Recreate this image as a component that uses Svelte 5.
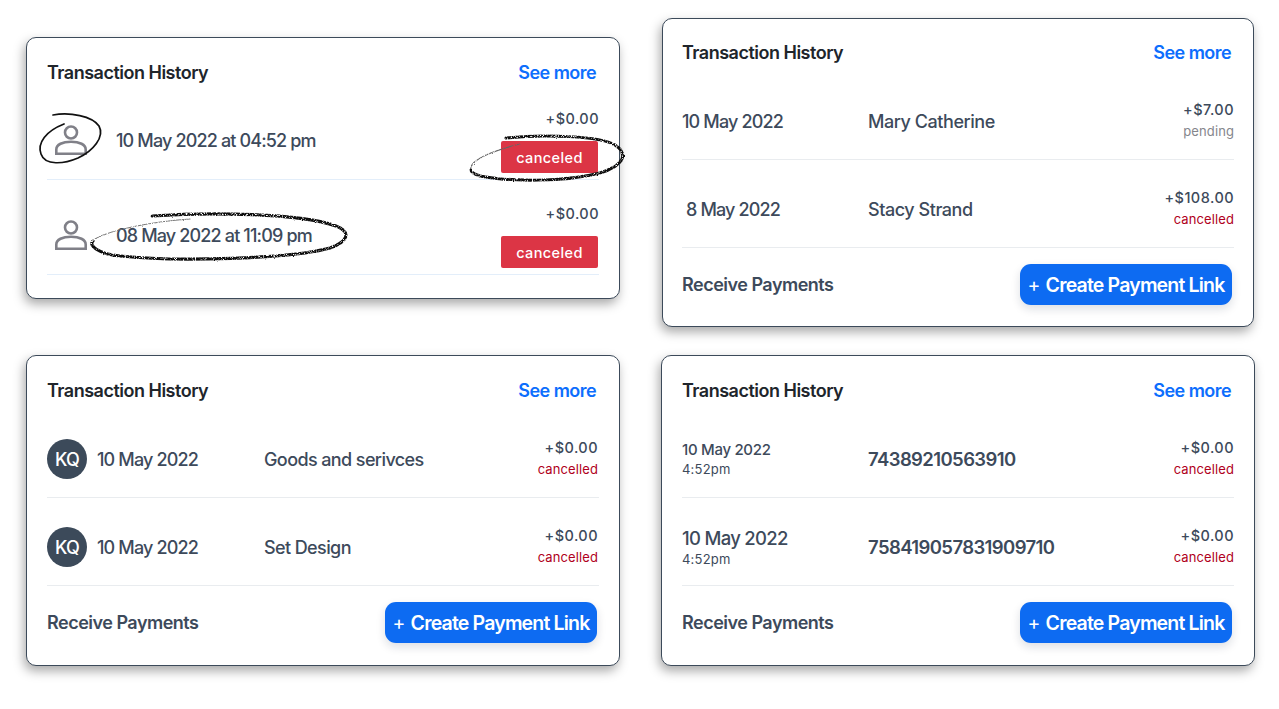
<script>
  const userRows = [
    { date: '10 May 2022 at 04:52 pm', amount: '+$0.00' },
    { date: '08 May 2022 at 11:09 pm', amount: '+$0.00' }
  ];
  const nameRows = [
    { date: '10 May 2022', indent: false, name: 'Mary Catherine', amount: '+$7.00', status: 'pending' },
    { date: '8 May 2022', indent: true, name: 'Stacy Strand', amount: '+$108.00', status: 'cancelled' }
  ];
  const avatarRows = [
    { date: '10 May 2022', name: 'Goods and serivces' },
    { date: '10 May 2022', name: 'Set Design' }
  ];
  const idRows = [
    { date: '10 May 2022', big: false, id: '74389210563910' },
    { date: '10 May 2022', big: true, id: '758419057831909710' }
  ];
</script>

{#snippet header()}
  <div class="header">
    <span class="title">Transaction History</span>
    <span class="more">See more</span>
  </div>
{/snippet}

{#snippet footer()}
  <div class="footer">
    <span class="receive">Receive Payments</span>
    <button class="create"><span class="plus">+</span>Create Payment Link</button>
  </div>
{/snippet}

{#snippet money(amount, status)}
  <div class="money">
    <div class="amount">{amount}</div>
    <div class="status {status}">{status}</div>
  </div>
{/snippet}

<div class="page">
  <section class="card one">
    {@render header()}
    {#each userRows as r}
      <div class="row tall">
        <svg class="person" width="32" height="30" viewBox="0 0 32 30" fill="none" stroke="#808088" stroke-width="2.6">
          <circle cx="16" cy="7.5" r="6" />
          <path d="M1.3 28.7v-4.2c0-5 6.2-7.800 14.700-7.800s14.700 2.800 14.700 7.800v4.200z" />
        </svg>
        <span class="date long">{r.date}</span>
        <div class="stack">
          <div class="amount">{r.amount}</div>
          <div class="badge">canceled</div>
        </div>
      </div>
    {/each}
  </section>

  <section class="card two">
    {@render header()}
    {#each nameRows as r}
      <div class="row">
        <span class="date col" class:indent={r.indent}>{r.date}</span>
        <span class="desc">{r.name}</span>
        {@render money(r.amount, r.status)}
      </div>
    {/each}
    {@render footer()}
  </section>

  <section class="card three">
    {@render header()}
    {#each avatarRows as r}
      <div class="row">
        <span class="avatar">KQ</span>
        <span class="date avcol">{r.date}</span>
        <span class="desc">{r.name}</span>
        {@render money('+$0.00', 'cancelled')}
      </div>
    {/each}
    {@render footer()}
  </section>

  <section class="card">
    {@render header()}
    {#each idRows as r}
      <div class="row">
        <div class="col when">
          <div class="day" class:big={r.big}>{r.date}</div>
          <div class="time">4:52pm</div>
        </div>
        <span class="desc ident">{r.id}</span>
        {@render money('+$0.00', 'cancelled')}
      </div>
    {/each}
    {@render footer()}
  </section>

  <svg class="scribbles" width="1279" height="709" viewBox="0 0 1279 709" fill="none" aria-hidden="true">
    <defs>
      <filter id="rough" x="-10%" y="-30%" width="120%" height="160%">
        <feTurbulence type="fractalNoise" baseFrequency="0.9" numOctaves="2" seed="4" result="noise" />
        <feDisplacementMap in="SourceGraphic" in2="noise" scale="2.2" result="moved" />
        <feColorMatrix in="noise" type="matrix" values="0 0 0 0 0  0 0 0 0 0  0 0 0 0 0  0 0 0 -5 3.6" result="grain" />
        <feComposite in="moved" in2="grain" operator="in" />
      </filter>
    </defs>
    <path d="M53 115C70 112 92 116 99 126C105 137 93 151 78 158C64 164 45 166 41 154C37 143 46 131 64 124" stroke="#111" stroke-width="1.700" stroke-linecap="round" />
    <g filter="url(#rough)" stroke-linecap="round">
      <path d="M190 219C150 222 110 230 95 239" stroke="#777" stroke-width="1.200" />
      <path d="M152 216C210 212 300 213 336 226C351 232 349 241 330 248C290 259 175 262 120 256C98 254 88 245 93 241" stroke="#111" stroke-width="3.200" />
      <path d="M520 144C495 150 468 160 471 170" stroke="#666" stroke-width="1.200" />
      <path d="M506 138C545 134 600 136 615 145C630 155 622 166 600 173C565 182 510 182 480 176C474 174 471 172 471 170" stroke="#111" stroke-width="3" />
    </g>
  </svg>
</div>

<style>
  :global(body) {
    margin: 0;
    background: #fff;
  }

  .page {
    position: relative;
    width: 1279px;
    height: 709px;
    box-sizing: border-box;
    padding: 18px 0 0 26px;
    display: grid;
    grid-template-columns: 594px 594px;
    column-gap: 41px;
    row-gap: 28px;
    align-items: start;
    align-content: start;
    font-family: Inter, "Noto Sans", sans-serif;
    color: #3d4a5b;
    overflow: hidden;
  }

  .card {
    box-sizing: border-box;
    background: #fff;
    border: 1px solid #3c4a5a;
    border-radius: 10px;
    padding: 15px 20px 22px;
    box-shadow: -2px 5px 11px rgba(0, 0, 0, 0.34);
  }

  .one {
    margin-top: 19px;
    padding-top: 22px;
    padding-bottom: 23px;
  }

  .two {
    margin: 0 1px;
    padding: 14px 19px 21px;
  }

  .header {
    height: 39px;
    display: flex;
    align-items: center;
    justify-content: space-between;
  }

  .one .header {
    height: 25px;
  }

  .title {
    font-size: 18px;
    font-weight: 600;
    letter-spacing: -0.5px;
    color: #20252b;
  }

  .more {
    font-size: 18px;
    font-weight: 600;
    letter-spacing: -0.55px;
    color: #0d6efd;
    margin-right: 3px;
  }

  .row {
    height: 77px;
    margin-top: 11px;
    box-sizing: border-box;
    border-bottom: 1px solid #e9ecef;
    display: flex;
    align-items: center;
  }

  .tall {
    height: 90px;
    margin-top: 5px;
    padding-top: 11px;
    border-bottom-color: #e3eefa;
    position: relative;
  }

  .person {
    margin-left: 8px;
    flex: none;
  }

  .date,
  .desc {
    font-size: 18px;
    font-weight: 500;
    letter-spacing: -0.85px;
    white-space: nowrap;
  }

  .desc {
    letter-spacing: -0.45px;
  }

  .three .desc {
    letter-spacing: -0.6px;
  }

  .long {
    margin-left: 29px;
  }

  .col {
    width: 186px;
    flex: none;
  }

  .indent {
    box-sizing: border-box;
    padding-left: 4px;
  }

  .avatar {
    width: 40px;
    height: 40px;
    flex: none;
    border-radius: 50%;
    background: #3c4a5a;
    color: #fff;
    font-size: 18px;
    font-weight: 500;
    letter-spacing: -0.8px;
    display: flex;
    align-items: center;
    justify-content: center;
  }

  .avcol {
    width: 167px;
    margin-left: 10px;
    flex: none;
  }

  .day {
    font-size: 15px;
    font-weight: 500;
    letter-spacing: -0.3px;
    line-height: 20px;
  }

  .day.big {
    font-size: 18.5px;
    line-height: 24px;
    letter-spacing: -0.7px;
  }

  .time {
    font-size: 13px;
    line-height: 18px;
    letter-spacing: 0.2px;
  }

  .desc.ident {
    font-size: 18.5px;
    font-weight: 600;
    letter-spacing: -0.6px;
  }

  .money,
  .stack {
    margin-left: auto;
    text-align: right;
  }

  .money {
    margin-bottom: 2px;
  }

  .three .money {
    padding-right: 1px;
  }

  .stack {
    align-self: flex-end;
    padding-bottom: 6px;
  }

  .amount {
    font-size: 14.5px;
    font-weight: 500;
    line-height: 20px;
    letter-spacing: 0.45px;
  }

  .stack .amount {
    margin-bottom: 12px;
  }

  .status {
    font-size: 13px;
    line-height: 20px;
    margin-top: 1px;
    letter-spacing: 0.1px;
  }

  .pending {
    color: #85868c;
  }

  .cancelled {
    color: #b00020;
  }

  .badge {
    box-sizing: border-box;
    width: 97px;
    height: 32px;
    margin-right: 1px;
    background: #dc3545;
    border-radius: 2px;
    color: #fff;
    font-size: 14.5px;
    font-weight: 500;
    letter-spacing: 0.4px;
    display: flex;
    align-items: center;
    justify-content: center;
  }

  .footer {
    display: flex;
    align-items: center;
    justify-content: space-between;
    margin-top: 16px;
  }

  .receive {
    font-size: 18px;
    font-weight: 600;
    letter-spacing: -0.5px;
  }

  .create {
    width: 212px;
    height: 41px;
    margin-right: 2px;
    padding: 0;
    border: 0;
    border-radius: 11px;
    background: #0d6bf2;
    color: #fff;
    font-family: inherit;
    font-size: 19.5px;
    font-weight: 600;
    letter-spacing: -0.82px;
    white-space: nowrap;
    display: flex;
    align-items: center;
    justify-content: center;
    box-shadow: 0 4px 10px rgba(13, 30, 60, 0.14);
  }

  .plus {
    font-weight: 400;
    margin-right: 6px;
  }

  .scribbles {
    position: absolute;
    left: 0;
    top: 0;
    pointer-events: none;
  }
</style>
